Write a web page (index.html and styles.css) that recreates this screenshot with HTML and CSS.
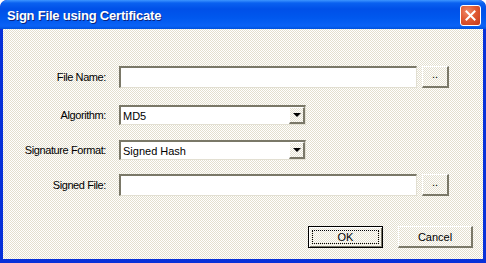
FILE: index.html
```html
<!DOCTYPE html>
<html lang="en">
<head>
  <meta charset="UTF-8">
  <title>Sign File using Certificate</title>
  <link rel="stylesheet" href="styles.css">
</head>
<body>
<div class="window">
  <div class="titlebar">
    <span class="title">Sign File using Certificate</span>
    <button class="close-btn" aria-label="Close">
      <svg width="11" height="11" viewBox="0 0 11 11">
        <path d="M1.5 1.5 L9.5 9.5 M9.5 1.5 L1.5 9.5" stroke="#fff" stroke-width="2" stroke-linecap="square"/>
      </svg>
    </button>
  </div>

  <div class="client">
    <div class="form">
      <div class="row row-file">
        <label class="label">File Name:</label>
        <div class="textbox wide"></div>
        <button class="browse">..</button>
      </div>

      <div class="row row-algo">
        <label class="label">Algorithm:</label>
        <div class="combo">
          <span class="combo-text">MD5</span>
          <span class="combo-arrow"><span class="tri"></span></span>
        </div>
      </div>

      <div class="row row-format">
        <label class="label">Signature Format:</label>
        <div class="combo">
          <span class="combo-text">Signed Hash</span>
          <span class="combo-arrow"><span class="tri"></span></span>
        </div>
      </div>

      <div class="row row-signed">
        <label class="label">Signed File:</label>
        <div class="textbox wide"></div>
        <button class="browse">..</button>
      </div>
    </div>

    <div class="actions">
      <button class="push default"><span class="focus">OK</span></button>
      <button class="push">Cancel</button>
    </div>
  </div>
</div>
</body>
</html>
```

FILE: styles.css
```css
body {
  margin: 0;
  padding: 0;
  font-family: "Liberation Sans", Arial, sans-serif;
  font-size: 11px;
  color: #000;
  background: #fff;
}

.window {
  width: 486px;
  height: 263px;
  box-sizing: border-box;
  display: flex;
  flex-direction: column;
  background: #0831d9;
  border-radius: 7px 7px 0 0;
  padding: 0 3px 4px 3px;
  overflow: hidden;
}

.titlebar {
  height: 29px;
  margin: 0 -3px;
  padding: 0 5px 0 7px;
  display: flex;
  align-items: center;
  justify-content: space-between;
  border-radius: 7px 7px 0 0;
  background: linear-gradient(to bottom, #3d95ff 0, #0a61f0 3px, #0050e8 9px, #0058ee 18px, #0a62f6 26px, #0052dd 29px);
}

.title {
  color: #fff;
  font-family: "Liberation Sans", Arial, sans-serif;
  font-weight: bold;
  font-size: 13px;
  letter-spacing: -0.2px;
  text-shadow: 1px 1px 0 #0a2480;
  margin-top: 1px;
}

.close-btn {
  width: 21px;
  height: 21px;
  padding: 0;
  border: 1px solid #fff;
  border-radius: 3px;
  background: radial-gradient(circle at 35% 30%, #f08a6a 0, #e05a33 45%, #c4381a 100%);
  display: flex;
  align-items: center;
  justify-content: center;
  margin-top: 1px;
}

.client {
  flex: 1;
  display: flex;
  flex-direction: column;
  background-color: #f1efe6;
  background-image: conic-gradient(#ffffff 25%, #e3dfce 0 50%, #ffffff 0 75%, #e3dfce 0);
  background-size: 2px 2px;
  padding: 37px 10px 0 0;
}

.form {
  display: flex;
  flex-direction: column;
}

.row {
  display: flex;
  align-items: center;
}

.row-algo { margin-top: 17px; }
.row-format { margin-top: 15px; }
.row-signed { margin-top: 14px; }

.label {
  width: 103px;
  text-align: right;
  margin-right: 13px;
  white-space: nowrap;
  letter-spacing: -0.4px;
}

.textbox {
  box-sizing: border-box;
  height: 22px;
  background: #fff;
  border-top: 2px solid #7a7868;
  border-left: 2px solid #7a7868;
  border-right: 1px solid #e2dfd2;
  border-bottom: 1px solid #e2dfd2;
}

.wide {
  width: 298px;
}

.browse {
  box-sizing: border-box;
  width: 27px;
  height: 22px;
  margin-left: 5px;
  padding: 0 0 4px 0;
  font-family: "Liberation Sans", Arial, sans-serif;
  font-size: 11px;
  line-height: 1;
  background: transparent;
  border-top: 1px solid #fff;
  border-left: 1px solid #fff;
  border-right: 2px solid #7a7868;
  border-bottom: 2px solid #7a7868;
}

.combo {
  box-sizing: border-box;
  width: 187px;
  height: 20px;
  display: flex;
  align-items: center;
  background: #fff;
  border-top: 2px solid #7a7868;
  border-left: 2px solid #7a7868;
  border-right: 1px solid #e2dfd2;
  border-bottom: 1px solid #e2dfd2;
}

.combo-text {
  flex: 1;
  padding-left: 2px;
  font-size: 11px;
}

.combo-arrow {
  box-sizing: border-box;
  width: 16px;
  height: 17px;
  display: flex;
  align-items: center;
  justify-content: center;
  background-color: #f1efe6;
  background-image: conic-gradient(#ffffff 25%, #e3dfce 0 50%, #ffffff 0 75%, #e3dfce 0);
  background-size: 2px 2px;
  border-top: 1px solid #fff;
  border-left: 1px solid #fff;
  border-right: 2px solid #7a7868;
  border-bottom: 2px solid #7a7868;
}

.tri {
  width: 0;
  height: 0;
  border-left: 4px solid transparent;
  border-right: 4px solid transparent;
  border-top: 4px solid #000;
}

.actions {
  display: flex;
  justify-content: flex-end;
  gap: 15px;
  margin-top: 30px;
}

.push {
  box-sizing: border-box;
  width: 75px;
  height: 22px;
  padding: 0;
  font-family: "Liberation Sans", Arial, sans-serif;
  font-size: 11px;
  background: transparent;
  border-top: 1px solid #fff;
  border-left: 1px solid #fff;
  border-right: 2px solid #7a7868;
  border-bottom: 2px solid #7a7868;
}

.push.default {
  border: 1px solid #000;
  box-shadow: inset 1px 1px 0 #fff, inset -1px -1px 0 #7a7868;
  padding: 3px;
  display: flex;
}

.focus {
  flex: 1;
  display: flex;
  align-items: center;
  justify-content: center;
  border: 1px dotted #000;
}
```
